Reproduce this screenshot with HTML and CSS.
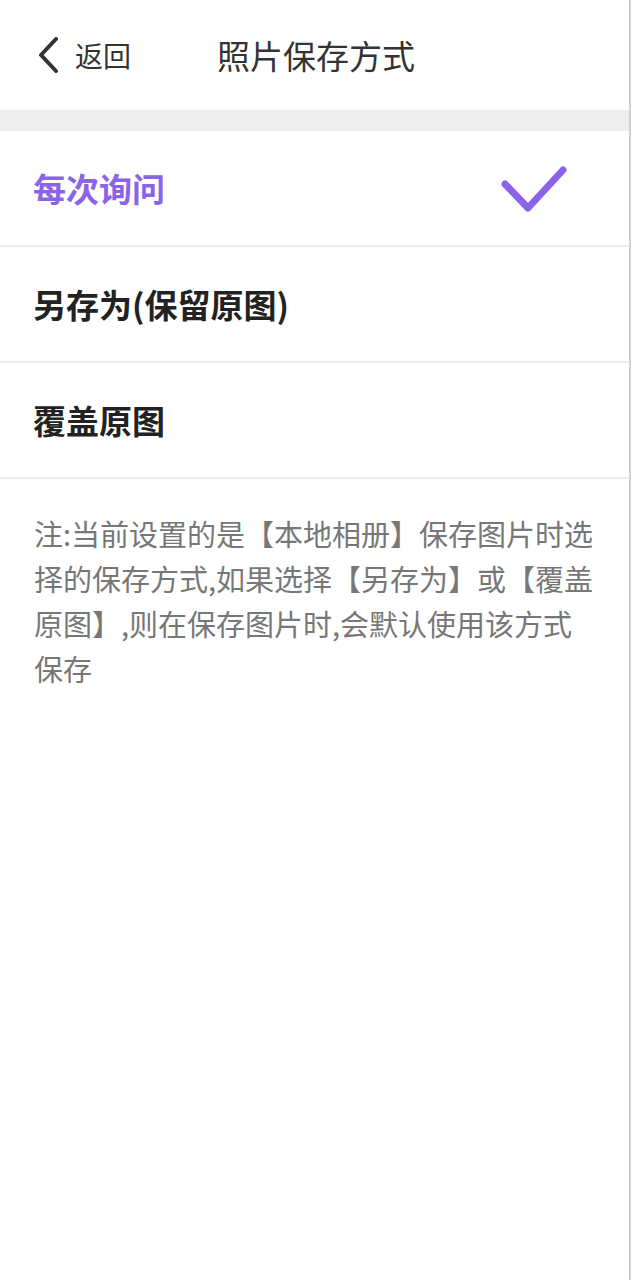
FILE: index.html
```html
<!DOCTYPE html>
<html lang="zh-CN">
<head>
    <meta charset="UTF-8">
    <meta name="viewport" content="width=device-width, initial-scale=1.0">
    <title>照片保存方式</title>
    <link rel="stylesheet" href="styles.css">
</head>
<body>
    <div class="page">
        <header class="topbar">
            <a class="back" href="#">
                <svg class="back-icon" width="22" height="36" viewBox="0 0 22 36">
                    <path d="M19 2 L4 18 L19 34" fill="none" stroke="#333" stroke-width="4" stroke-linecap="round" stroke-linejoin="round"/>
                </svg>
                <span>返回</span>
            </a>
            <h1 class="title">照片保存方式</h1>
        </header>

        <div class="gap"></div>

        <ul class="options">
            <li class="option selected">
                <span>每次询问</span>
                <svg class="check" width="72" height="54" viewBox="0 0 72 54">
                    <path d="M7 21 L30 45 L65 7" fill="none" stroke="#8b63ea" stroke-width="7" stroke-linecap="round" stroke-linejoin="round"/>
                </svg>
            </li>
            <li class="option"><span>另存为(保留原图)</span></li>
            <li class="option"><span>覆盖原图</span></li>
        </ul>

        <p class="note">注:当前设置的是【本地相册】保存图片时选择的保存方式,如果选择【另存为】或【覆盖原图】,则在保存图片时,会默认使用该方式保存</p>
    </div>
</body>
</html>
```

FILE: styles.css
```css
body {
    margin: 0;
    font-family: "Noto Sans CJK SC", "Noto Sans", sans-serif;
    background: #fff;
}
.page {
    min-height: 1280px;
    border-right: 2px solid #cfcfcf;
    box-sizing: border-box;
}
.topbar {
    height: 110px;
    display: flex;
    align-items: center;
    padding-left: 37px;
}
.back {
    display: flex;
    align-items: center;
    gap: 16px;
    color: #333;
    text-decoration: none;
    font-size: 28px;
    width: 180px;
}
.back-icon {
    display: block;
}
.title {
    margin: 0;
    font-size: 33px;
    font-weight: normal;
    color: #333;
}
.gap {
    height: 21px;
    background: #eeeeee;
}
.options {
    list-style: none;
    margin: 0;
    padding: 0;
}
.option {
    height: 114px;
    display: flex;
    align-items: center;
    justify-content: space-between;
    padding: 0 59px 0 33px;
    border-bottom: 2px solid #ececec;
    font-size: 33px;
    font-weight: bold;
    color: #222;
}
.option.selected {
    color: #8b63ea;
}
.check {
    display: block;
    margin-top: 3px;
}
.note {
    margin: 0;
    padding: 32px 30px 0 34px;
    font-size: 29px;
    line-height: 45px;
    color: #777;
}
```
